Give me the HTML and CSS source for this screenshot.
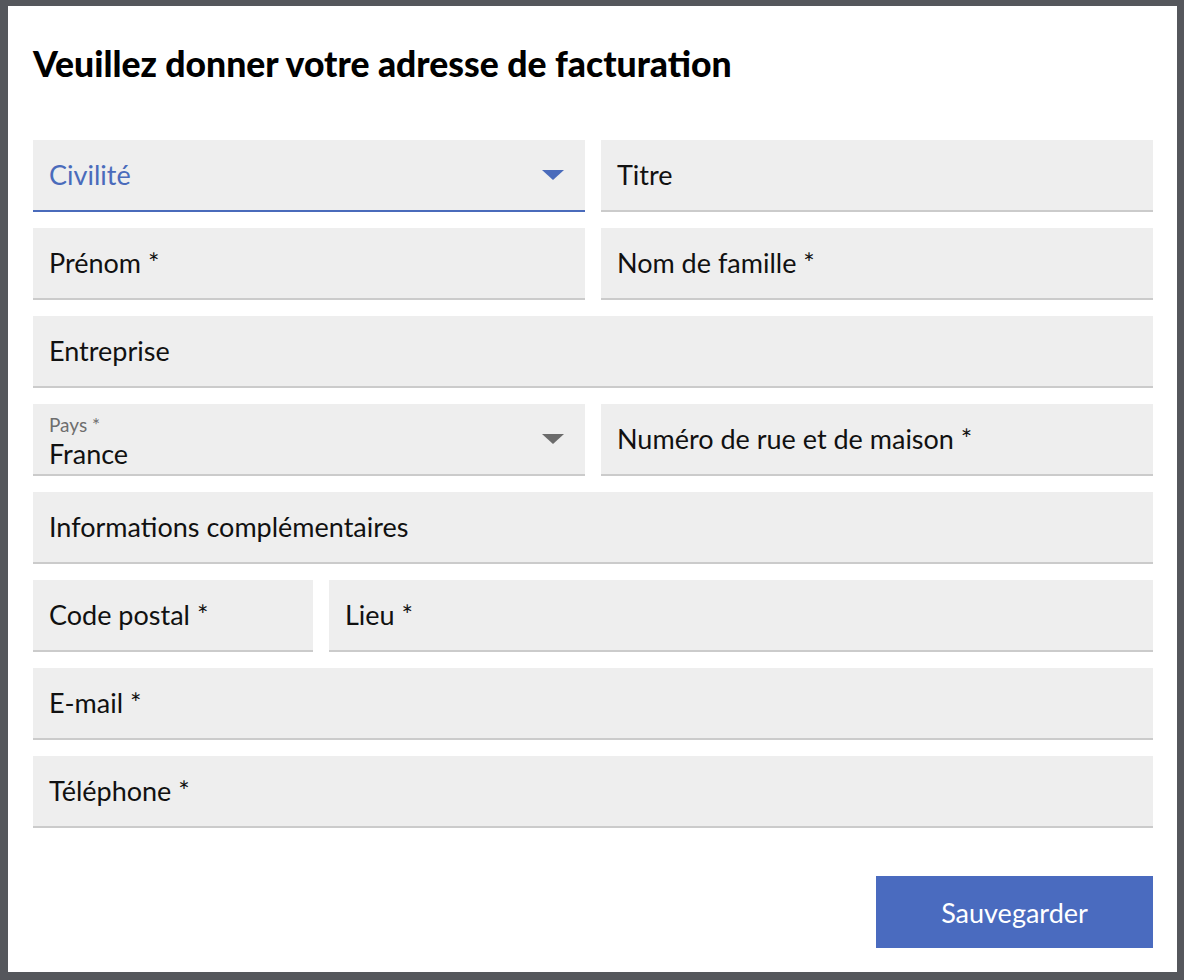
FILE: index.html
```html
<!DOCTYPE html>
<html lang="fr">
<head>
<meta charset="utf-8">
<title>Adresse de facturation</title>
<link rel="stylesheet" href="styles.css">
</head>
<body>
<div class="modal">
  <h1 class="title">Veuillez donner votre adresse de facturation</h1>
  <form class="form">
    <div class="row two">
      <div class="field select focused">
        <span class="value blue">Civilité</span>
        <svg class="arrow" width="22" height="10" viewBox="0 0 22 10"><path d="M0 0H22L11 10Z" fill="#4a6bbb"/></svg>
      </div>
      <div class="field"><span class="value">Titre</span></div>
    </div>
    <div class="row two">
      <div class="field"><span class="value">Prénom *</span></div>
      <div class="field"><span class="value">Nom de famille *</span></div>
    </div>
    <div class="row">
      <div class="field"><span class="value">Entreprise</span></div>
    </div>
    <div class="row two">
      <div class="field select">
        <div class="stack">
          <span class="small">Pays *</span>
          <span class="value">France</span>
        </div>
        <svg class="arrow" width="22" height="10" viewBox="0 0 22 10"><path d="M0 0H22L11 10Z" fill="#6b6b6b"/></svg>
      </div>
      <div class="field"><span class="value">Numéro de rue et de maison *</span></div>
    </div>
    <div class="row">
      <div class="field"><span class="value">Informations complémentaires</span></div>
    </div>
    <div class="row zip">
      <div class="field"><span class="value">Code postal *</span></div>
      <div class="field"><span class="value">Lieu *</span></div>
    </div>
    <div class="row">
      <div class="field"><span class="value">E-mail *</span></div>
    </div>
    <div class="row">
      <div class="field"><span class="value">Téléphone *</span></div>
    </div>
    <div class="actions">
      <button type="button" class="btn">Sauvegarder</button>
    </div>
  </form>
</div>
</body>
</html>
```
FILE: styles.css
```css
html, body {
  margin: 0;
  padding: 0;
}
body {
  background: #55575c;
  font-family: Lato, "Open Sans", sans-serif;
  color: #111;
}
.modal {
  background: #fff;
  margin: 6px 7px 8px 8px;
  height: 966px;
  box-sizing: border-box;
  padding: 38px 24px 24px 25px;
  display: flex;
  flex-direction: column;
}
.title {
  margin: 0;
  font-size: 35.5px;
  font-weight: 900;
  line-height: 40px;
  color: #000;
}
.form {
  margin-top: 56px;
  display: flex;
  flex-direction: column;
  gap: 16px;
  flex: 1;
}
.row {
  display: grid;
  grid-template-columns: 1fr;
  gap: 16px;
}
.row.two {
  grid-template-columns: 1fr 1fr;
}
.row.zip {
  grid-template-columns: 280px 1fr;
}
.field {
  height: 72px;
  box-sizing: border-box;
  background: #eeeeee;
  border-bottom: 2px solid #cbcbcb;
  padding: 0 21px 0 16px;
  display: flex;
  align-items: center;
  justify-content: space-between;
}
.field.focused {
  border-bottom-color: #4a6bbb;
}
.value {
  font-size: 27px;
  line-height: 30px;
  color: #111;
}
.value.blue {
  color: #4a6bbb;
}
.stack {
  display: flex;
  flex-direction: column;
  margin-top: 8px;
}
.stack .small {
  font-size: 19px;
  line-height: 22px;
  color: #6e6e6e;
}
.stack .value {
  line-height: 36px;
}
.arrow {
  display: block;
  flex: none;
}
.actions {
  margin-top: auto;
  display: flex;
  justify-content: flex-end;
}
.btn {
  width: 277px;
  height: 72px;
  border: none;
  background: #4a6bbf;
  color: #fff;
  font-family: inherit;
  font-size: 27px;
  cursor: pointer;
}
```
